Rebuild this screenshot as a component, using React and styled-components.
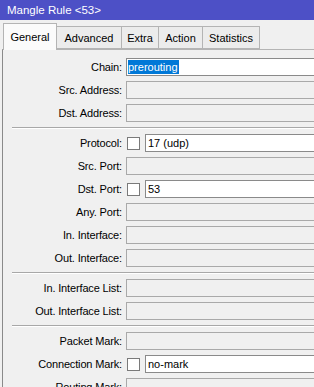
import React from "react";
import styled, { createGlobalStyle } from "styled-components";

const Global = createGlobalStyle`
  html, body { margin: 0; padding: 0; background: #f0f0f0; overflow: hidden; }
  body { font-family: "Liberation Sans", Arial, sans-serif; font-size: 11px; color: #000; }
`;

const Window = styled.div`
  width: 440px;
  height: 420px;
  background: #f0f0f0;
  display: flex;
  flex-direction: column;
`;

const TitleBar = styled.div`
  height: 20px;
  line-height: 20px;
  background: #4d50c6;
  color: #fff;
  font-size: 11.5px;
  padding-left: 7px;
  white-space: nowrap;
`;

const Body = styled.div`
  flex: 1;
  padding-left: 2px;
  display: flex;
  flex-direction: column;
`;

const TabStrip = styled.div`
  height: 29px;
  display: flex;
  align-items: flex-end;
  padding-left: 1px;
  position: relative;
  z-index: 1;
`;

const Tab = styled.div`
  box-sizing: border-box;
  width: ${(p) => p.$w}px;
  height: ${(p) => (p.$active ? 27 : 23)}px;
  margin-bottom: ${(p) => (p.$active ? -1 : 0)}px;
  background: ${(p) => (p.$active ? "#fbfbfb" : "#ececec")};
  border: 1px solid #b4b4b4;
  border-bottom: ${(p) => (p.$active ? "none" : "1px solid #b4b4b4")};
  border-left: ${(p) => (p.$active || p.$first ? "1px solid #b4b4b4" : "none")};
  display: flex;
  align-items: center;
  justify-content: center;
  padding-top: ${(p) => (p.$active ? 0 : 1)}px;
  font-size: 11px;
  white-space: nowrap;
`;

const Panel = styled.div`
  flex: 1;
  border-top: 1px solid #b4b4b4;
  border-left: 1px solid #8a8a8a;
  padding-top: 8px;
  display: flex;
  flex-direction: column;
  gap: 5px;
`;

const Row = styled.div`
  display: grid;
  grid-template-columns: 119px 1fr;
  column-gap: 4px;
  height: 18px;
`;

const Label = styled.div`
  text-align: right;
  line-height: 18px;
  white-space: nowrap;
  letter-spacing: -0.15px;
`;

const FieldArea = styled.div`
  display: flex;
  align-items: center;
  gap: 5px;
`;

const Check = styled.div`
  box-sizing: border-box;
  width: 13px;
  height: 13px;
  margin-left: 1px;
  background: #fff;
  border: 1px solid #7a7a7a;
  flex: none;
`;

const Input = styled.div`
  box-sizing: border-box;
  flex: 1;
  height: 18px;
  border: 1px solid ${(p) => (p.$enabled ? "#8a8a8a" : "#a9a9a9")};
  background: ${(p) => (p.$enabled ? "#fff" : "#f0f0f0")};
  padding-left: ${(p) => (p.$sel ? 1 : 2)}px;
  display: flex;
  align-items: center;
  white-space: nowrap;
`;

const Selected = styled.span`
  background: #0078d7;
  color: #fff;
  line-height: 14px;
  padding-right: 1px;
`;

const Separator = styled.div`
  height: 0;
  margin-left: 9px;
  border-top: 1px solid #a8a8a8;
  border-bottom: 1px solid #fff;
`;

const tabs = [
  ["General", 54],
  ["Advanced", 65],
  ["Extra", 37],
  ["Action", 44],
  ["Statistics", 57],
];

const sections = [
  [
    { label: "Chain:", value: "prerouting", selected: true },
    { label: "Src. Address:" },
    { label: "Dst. Address:" },
  ],
  [
    { label: "Protocol:", check: true, value: "17 (udp)" },
    { label: "Src. Port:" },
    { label: "Dst. Port:", check: true, value: "53" },
    { label: "Any. Port:" },
    { label: "In. Interface:" },
    { label: "Out. Interface:" },
  ],
  [{ label: "In. Interface List:" }, { label: "Out. Interface List:" }],
  [
    { label: "Packet Mark:" },
    { label: "Connection Mark:", check: true, value: "no-mark" },
    { label: "Routing Mark:" },
  ],
];

function Field({ f }) {
  return (
    <Row>
      <Label>{f.label}</Label>
      <FieldArea>
        {f.check && <Check />}
        <Input $enabled={f.value !== undefined} $sel={f.selected}>
          {f.selected ? <Selected>{f.value}</Selected> : f.value}
        </Input>
      </FieldArea>
    </Row>
  );
}

export default function App() {
  return (
    <>
      <Global />
      <Window>
        <TitleBar>Mangle Rule &lt;53&gt;</TitleBar>
        <Body>
          <TabStrip>
            {tabs.map(([t, w], i) => (
              <Tab key={t} $w={w} $active={i === 0} $first={i === 0}>
                {t}
              </Tab>
            ))}
          </TabStrip>
          <Panel>
            {sections.map((s, si) => (
              <React.Fragment key={si}>
                {si > 0 && <Separator />}
                {s.map((f) => (
                  <Field key={f.label} f={f} />
                ))}
              </React.Fragment>
            ))}
          </Panel>
        </Body>
      </Window>
    </>
  );
}
